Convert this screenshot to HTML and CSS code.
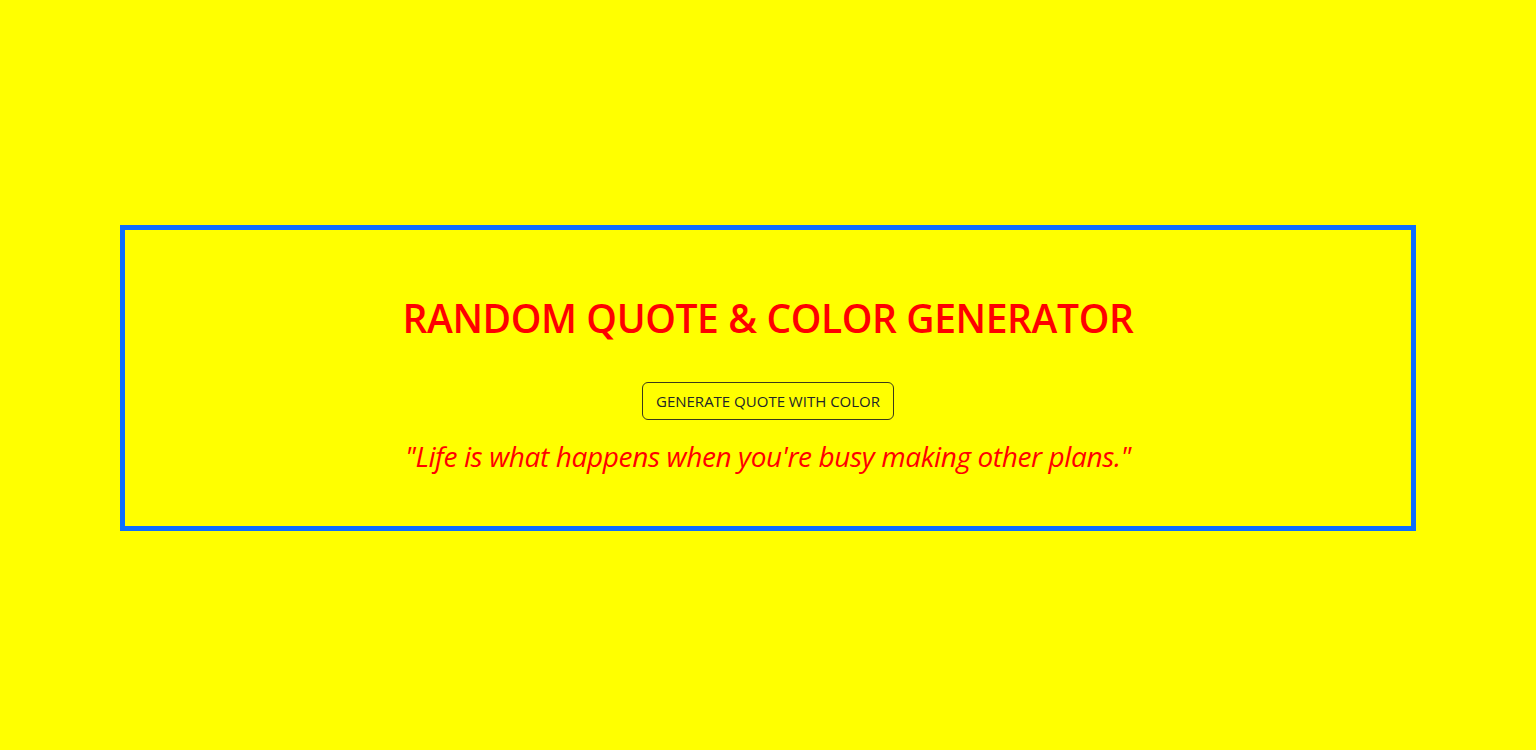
FILE: index.html
```html
<!DOCTYPE html>
<html lang="en">
<head>
<meta charset="utf-8">
<title>Random Quote &amp; Color Generator</title>
<link rel="stylesheet" href="styles.css">
</head>
<body>
  <main class="card">
    <h1 class="title">RANDOM QUOTE &amp; COLOR GENERATOR</h1>
    <button class="btn" type="button">GENERATE QUOTE WITH COLOR</button>
    <p class="quote">"Life is what happens when you're busy making other plans."</p>
  </main>
</body>
</html>
```
FILE: styles.css
```css
html, body {
  margin: 0;
  background: #ffff00;
}
body {
  padding: 225px 120px 0;
  font-family: "Open Sans", "Noto Sans", sans-serif;
}
.card {
  border: 5px solid #0d6efd;
  height: 306px;
  box-sizing: border-box;
  padding-top: 64px;
  display: flex;
  flex-direction: column;
  align-items: center;
}
.title {
  margin: 0;
  font-size: 39px;
  line-height: 48px;
  font-weight: 600;
  letter-spacing: -0.4px;
  color: #ff0000;
}
.btn {
  margin-top: 40px;
  height: 38px;
  padding: 0 13px;
  border: 1px solid #3a3a1a;
  border-radius: 6px;
  background: transparent;
  color: #212529;
  font-family: inherit;
  font-size: 15px;
  letter-spacing: 0;
}
.quote {
  margin: 20px 0 0;
  font-size: 28px;
  line-height: 33.6px;
  font-style: italic;
  font-weight: 400;
  letter-spacing: -0.38px;
  color: #ff0000;
}
```
